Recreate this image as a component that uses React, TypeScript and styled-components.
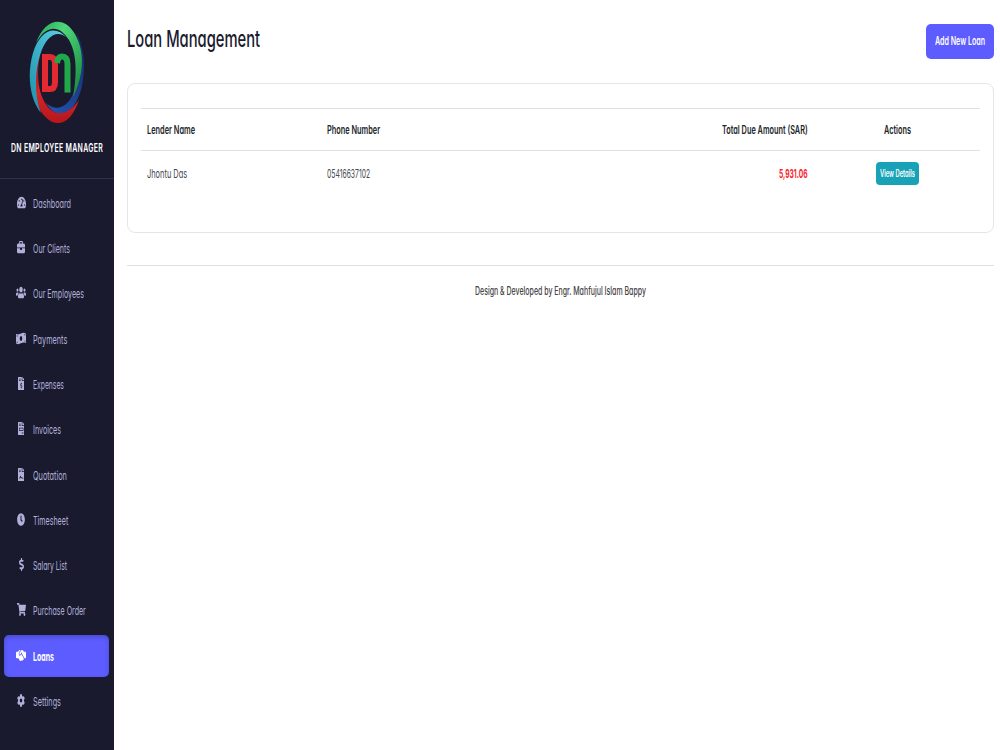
import React, { useLayoutEffect, useRef, useState } from "react";
import styled, { createGlobalStyle } from "styled-components";
import {
  FaTachometerAlt, FaUsers, FaMoneyBillWave, FaFileInvoiceDollar, FaFileInvoice,
  FaFileContract, FaClock, FaDollarSign, FaShoppingCart, FaCog,
} from "react-icons/fa";
import { FaBriefcase, FaHandshakeSimple } from "react-icons/fa6";

const Global = createGlobalStyle`
  * { box-sizing: border-box; }
  body {
    margin: 0;
    background: #fff;
    font-family: Inter, "Liberation Sans", sans-serif;
    font-feature-settings: "cv11";
    overflow: hidden;
  }
`;

const FitBox = styled.span<{ $w: number }>`
  display: block;
  flex: none;
  width: ${(p) => p.$w}px;
  white-space: nowrap;
`;
const FitInner = styled.span`
  display: inline-block;
  transform-origin: 0 50%;
`;

/* Condenses a line of text to the given width. */
function Fit({ w, children }: { w: number; children: string }) {
  const ref = useRef<HTMLSpanElement>(null);
  const [k, setK] = useState(0.6);
  useLayoutEffect(() => {
    const natural = ref.current?.offsetWidth;
    if (natural) setK(w / natural);
  }, [w, children]);
  return (
    <FitBox $w={w}>
      <FitInner ref={ref} style={{ transform: `scaleX(${k})` }}>{children}</FitInner>
    </FitBox>
  );
}

const Page = styled.div`
  display: flex;
  height: 750px;
  width: 1000px;
`;
const Sidebar = styled.aside`
  width: 114px;
  flex: none;
  background: #1a1a2e;
`;
const Brand = styled.div`
  height: 179px;
  padding-top: 21px;
  display: flex;
  flex-direction: column;
  align-items: center;
  border-bottom: 1px solid #30304a;
  color: #fff;
  font-size: 11.7px;
  font-weight: 600;
  line-height: 16px;
  letter-spacing: 0.5px;
`;
const Logo = styled.svg`
  display: block;
  width: 58px;
  height: 104px;
  margin-bottom: 15px;
`;
const Nav = styled.nav`
  display: flex;
  flex-direction: column;
  gap: 3.77px;
  padding: 3.7px 5px 0 4px;
`;
const NavItem = styled.a<{ $active?: boolean }>`
  display: flex;
  align-items: center;
  height: 41.5px;
  padding-left: 12px;
  border-radius: 5px;
  font-size: 12px;
  font-weight: ${(p) => (p.$active ? 700 : 400)};
  color: ${(p) => (p.$active ? "#fff" : "#b0b0d8")};
  background: ${(p) => (p.$active ? "#5c5cff" : "transparent")};
  box-shadow: ${(p) => (p.$active ? "inset 0 2px 4px rgba(0, 0, 0, 0.2)" : "none")};
`;
const IconBox = styled.span<{ $w: number; $h: number }>`
  display: flex;
  justify-content: center;
  width: 10px;
  margin: 0 6.5px 2px 0;
  svg {
    display: block;
    flex: none;
    width: ${(p) => p.$w}px;
    height: ${(p) => p.$h}px;
  }
`;
const Main = styled.main`
  flex: 1;
  padding: 24px 6px 0 13px;
`;
const Header = styled.header`
  display: flex;
  justify-content: space-between;
  height: 59px;
`;
const Title = styled.h1`
  margin: 0;
  font-size: 23.5px;
  font-weight: 500;
  line-height: 30px;
  color: #1a1a2e;
`;
const AddButton = styled.button`
  width: 68px;
  height: 35px;
  padding: 0 0 1px 9px;
  border: 0;
  border-radius: 5px;
  background: #5c5cff;
  color: #fff;
  font: 600 11.5px Inter, sans-serif;
  font-feature-settings: "cv11";
  text-align: left;
`;
const Card = styled.section`
  height: 150px;
  padding: 24px 13px 0;
  border: 1px solid #e6e6e8;
  border-radius: 8px;
`;
const Row = styled.div<{ $head?: boolean }>`
  display: grid;
  grid-template-columns: 180px 1fr 180px 172.5px;
  align-items: center;
  height: ${(p) => (p.$head ? 43 : 45)}px;
  padding: 0 0 0 5.5px;
  border: 0 solid #dee2e6;
  border-width: ${(p) => (p.$head ? "1px 0" : "0")};
  font-size: 11.7px;
  font-weight: ${(p) => (p.$head ? 600 : 400)};
  color: ${(p) => (p.$head ? "#212529" : "#444a50")};
`;
const Cell = styled.div<{ $due?: boolean }>`
  display: flex;
  ${(p) => p.$due && "color: #f8232b; font-weight: 700;"}
`;
const AmountCell = styled(Cell)`
  justify-content: flex-end;
`;
const ActionCell = styled(Cell)`
  justify-content: center;
  padding-left: 6.5px;
`;
const DetailsButton = styled.button`
  width: 43px;
  height: 23px;
  padding: 0 0 1px 4px;
  border: 0;
  border-radius: 4px;
  background: #17a2b8;
  color: #fff;
  font: 600 9.8px Inter, sans-serif;
  font-feature-settings: "cv11";
  text-align: left;
`;
const Footer = styled.footer`
  display: flex;
  justify-content: center;
  margin-top: 32px;
  padding-top: 17px;
  border-top: 1px solid #dfe1e3;
  font-size: 11.5px;
  font-weight: 500;
  line-height: 16px;
  color: #444;
`;

const items = [
  { label: "Dashboard", w: 38, Icon: FaTachometerAlt, iw: 9 },
  { label: "Our Clients", w: 37, Icon: FaBriefcase, iw: 8 },
  { label: "Our Employees", w: 51, Icon: FaUsers, iw: 10 },
  { label: "Payments", w: 34, Icon: FaMoneyBillWave, iw: 10 },
  { label: "Expenses", w: 31, Icon: FaFileInvoiceDollar, iw: 6.5 },
  { label: "Invoices", w: 28, Icon: FaFileInvoice, iw: 6.5 },
  { label: "Quotation", w: 34, Icon: FaFileContract, iw: 6.5 },
  { label: "Timesheet", w: 35.5, Icon: FaClock, iw: 8 },
  { label: "Salary List", w: 34, Icon: FaDollarSign, iw: 5 },
  { label: "Purchase Order", w: 52.5, Icon: FaShoppingCart, iw: 9 },
  { label: "Loans", w: 21, Icon: FaHandshakeSimple, iw: 10, ih: 15 },
  { label: "Settings", w: 28, Icon: FaCog, iw: 8 },
];

function BrandLogo() {
  return (
    <Logo viewBox="0 0 58 104" fill="none">
      <defs>
        <linearGradient id="green" x1="0" y1="0" x2="1" y2="1">
          <stop offset="0" stopColor="#20a552" />
          <stop offset=".35" stopColor="#4fd77a" />
          <stop offset="1" stopColor="#118238" />
        </linearGradient>
        <linearGradient id="cyan" x1="1" y1="0" x2="0" y2="1">
          <stop offset="0" stopColor="#5fd0ea" />
          <stop offset="1" stopColor="#1790a8" />
        </linearGradient>
        <linearGradient id="red" x1="0" y1="0" x2="0" y2="1">
          <stop offset="0" stopColor="#8e1518" />
          <stop offset=".6" stopColor="#d92329" />
          <stop offset="1" stopColor="#b5171b" />
        </linearGradient>
        <linearGradient id="blue" x1="1" y1="0" x2="0" y2="1">
          <stop offset="0" stopColor="#182c68" />
          <stop offset="1" stopColor="#2456b4" />
        </linearGradient>
      </defs>
      <path d="M48 12C57 26 58 50 53 69C45 95 30 101 18 82C30 93 43 84 48 65C53 47 54 28 48 12Z" fill="url(#blue)" />
      <path d="M14 26C9 44 8 65 16 80C25 97 39 96 51 79C42 106 26 108 14 92C3 77 3 44 14 26Z" fill="url(#red)" />
      <path d="M39 17C30 8 18 14 12 34C6 54 7 77 13 92C1 77-1 52 5 32C12 9 27 3 39 17Z" fill="url(#cyan)" />
      <path d="M8 22C17-3 36-6 47 13C57 31 56 54 45 76C49 52 49 33 41 19C31 3 18 4 8 22Z" fill="url(#green)" />
      <path d="M17 36H22Q27 36 27 43V61Q27 68 22 68H17Z" stroke="#e32a30" strokeWidth="6" />
      <path d="M29 42Q30 35.500 34 35.500Q39.500 35.500 39.500 43V71.500" stroke="#21a84a" strokeWidth="6" />
    </Logo>
  );
}

export default function App() {
  return (
    <Page>
      <Global />
      <Sidebar>
        <Brand>
          <BrandLogo />
          <Fit w={92}>DN EMPLOYEE MANAGER</Fit>
        </Brand>
        <Nav>
          {items.map(({ label, w, Icon, iw, ih }) => (
            <NavItem key={label} $active={label === "Loans"}>
              <IconBox $w={iw} $h={ih ?? 13}><Icon preserveAspectRatio="none" /></IconBox>
              <Fit w={w}>{label}</Fit>
            </NavItem>
          ))}
        </Nav>
      </Sidebar>
      <Main>
        <Header>
          <Title><Fit w={133}>Loan Management</Fit></Title>
          <AddButton><Fit w={50}>Add New Loan</Fit></AddButton>
        </Header>
        <Card>
          <Row $head>
            <Cell><Fit w={48}>Lender Name</Fit></Cell>
            <Cell><Fit w={53}>Phone Number</Fit></Cell>
            <AmountCell><Fit w={86}>Total Due Amount (SAR)</Fit></AmountCell>
            <ActionCell><Fit w={27}>Actions</Fit></ActionCell>
          </Row>
          <Row>
            <Cell><Fit w={40}>Jhontu Das</Fit></Cell>
            <Cell><Fit w={43}>05416637102</Fit></Cell>
            <AmountCell $due><Fit w={28.5}>5,931.06</Fit></AmountCell>
            <ActionCell><DetailsButton><Fit w={35}>View Details</Fit></DetailsButton></ActionCell>
          </Row>
        </Card>
        <Footer><Fit w={171}>Design &amp; Developed by Engr. Mahfujul Islam Bappy</Fit></Footer>
      </Main>
    </Page>
  );
}
